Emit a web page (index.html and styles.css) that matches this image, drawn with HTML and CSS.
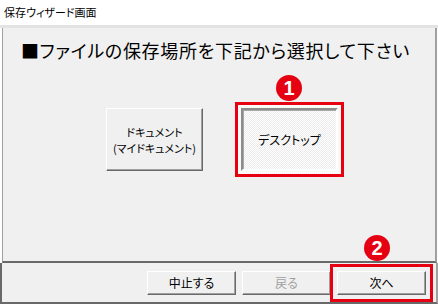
FILE: index.html
```html
<!DOCTYPE html>
<html lang="ja">
<head>
  <meta charset="UTF-8">
  <meta name="viewport" content="width=device-width, initial-scale=1.0">
  <title>保存ウィザード画面</title>
  <link rel="stylesheet" href="styles.css">
</head>
<body>
  <div class="window">
    <div class="titlebar">保存ウィザード画面</div>
    <div class="rule"></div>

    <div class="panel">
      <h1 class="heading">■ファイルの保存場所を下記から選択して下さい</h1>
      <div class="choices">
        <button class="choice">ドキュメント<br>(マイドキュメント)</button>
        <button class="choice pressed">デスクトップ<span class="badge badge-one">1</span></button>
      </div>
    </div>

    <div class="footer">
      <button class="cmd">中止する</button>
      <button class="cmd" disabled>戻る</button>
      <button class="cmd marked">次へ<span class="badge badge-two">2</span></button>
    </div>
  </div>
</body>
</html>
```

FILE: styles.css
```css
body {
  margin: 0; background: #fff;
  font-family: "Noto Sans CJK JP", sans-serif;
  font-feature-settings: "palt";
}
.window {
  width: 438px; height: 304px;
  display: flex; flex-direction: column;
}
.titlebar {
  height: 25px; line-height: 25px; padding-left: 4px;
  font-size: 11px; color: #000; background: #fff;
}
.rule { height: 3px; background: #e3e3e3; }

.panel {
  box-sizing: border-box; width: 435px; height: 235px; margin-left: 2px;
  background: #f0f0f0;
  border-left: 1px solid #a0a0a0; border-right: 2px solid #a0a0a0;
  border-bottom: 2px solid #696969;
}
.heading {
  margin: 11px 0 0 18px;
  font-size: 18px; line-height: 22px; font-weight: normal; color: #000;
  letter-spacing: 0.7px;
}
.choices {
  display: flex; gap: 38px;
  margin-top: 47px; padding-left: 103px;
}
.choice {
  position: relative; box-sizing: border-box;
  width: 97px; height: 63px; padding: 0;
  font: 11px/16px "Noto Sans CJK JP", sans-serif;
  font-feature-settings: "palt";
  color: #000; background: #f0f0f0;
  border: 1px solid; border-color: #fff #696969 #696969 #fff;
  box-shadow: inset -1px -1px #a0a0a0;
}
.choice.pressed {
  font-size: 12px;
  border: 2px solid; border-color: #8c8c8c #fff #fff #8c8c8c;
  box-shadow: inset 1px 1px #a8a8a8, 0 0 0 3px #fafafa, 0 0 0 6px #e60012;
  background: repeating-conic-gradient(#fff 0 25%, #ececec 0 50%) 0 0 / 2px 2px;
}

.footer {
  flex: 1;
  display: flex; justify-content: flex-end; align-items: flex-start; gap: 6px;
  padding: 8px 10px 0 0;
  background: #f0f0f0;
  border-left: 2px solid #696969; border-right: 2px solid #a0a0a0;
  border-bottom: 2px solid #696969;
}
.cmd {
  position: relative; box-sizing: border-box;
  width: 89px; height: 24px; padding: 0;
  font: 12px/22px "Noto Sans CJK JP", sans-serif;
  font-feature-settings: "palt";
  color: #000; background: #f0f0f0;
  border: 1px solid; border-color: #fff #696969 #696969 #fff;
  box-shadow: inset -1px -1px #a0a0a0;
}
.cmd:disabled { color: #a0a0a0; }
.cmd.marked { outline: 3px solid #e60012; outline-offset: 4px; }

.badge {
  position: absolute; width: 26px; height: 26px; border-radius: 50%;
  background: #e50012; color: #fff;
  font: bold 20px/26px "Liberation Sans", Arial, sans-serif;
  text-align: center;
}
.badge-one { left: 33px; top: -35px; }
.badge-two { left: 26px; top: -37px; }
```
